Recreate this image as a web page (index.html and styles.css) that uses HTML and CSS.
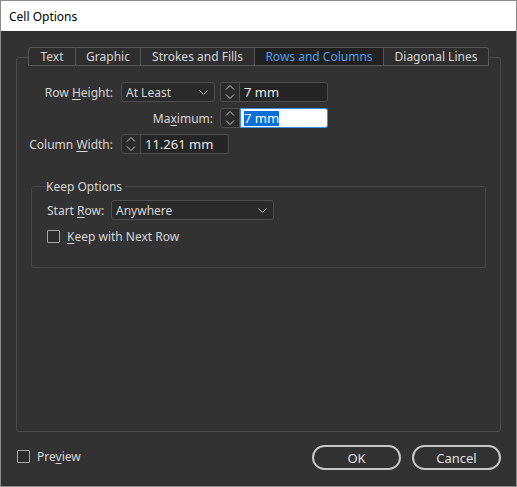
FILE: index.html
```html
<!DOCTYPE html>
<html>
<head>
<meta charset="utf-8">
<link rel="stylesheet" href="styles.css">
</head>
<body>
<div class="window">
  <div class="titlebar">Cell Options</div>
  <div class="body">
    <div class="tabs">
      <div class="tab t1">Text</div>
      <div class="tab t2">Graphic</div>
      <div class="tab t3">Strokes and Fills</div>
      <div class="tab t4 active">Rows and Columns</div>
      <div class="tab t5">Diagonal Lines</div>
    </div>
    <div class="panel">
      <div class="row">
        <span class="label w96">Row <u>H</u>eight:</span>
        <div class="select w94"><span>At Least</span><svg class="chev" width="9" height="6" viewBox="0 0 9 6"><path d="M0.5 0.5 L4.5 4.5 L8.5 0.5" fill="none" stroke="#bdbdbd" stroke-width="1"/></svg></div>
        <div class="spin gap5">
          <div class="arrows"><svg width="10" height="18" viewBox="0 0 10 18"><path d="M1 6.5 L5 2.5 L9 6.5 M1 11.5 L5 15.5 L9 11.5" fill="none" stroke="#c8c8c8" stroke-width="1"/></svg></div>
          <div class="input">7 mm</div>
        </div>
      </div>
      <div class="row">
        <span class="label w196">Ma<u>x</u>imum:</span>
        <div class="spin gap7">
          <div class="arrows"><svg width="10" height="18" viewBox="0 0 10 18"><path d="M1 6.5 L5 2.5 L9 6.5 M1 11.5 L5 15.5 L9 11.5" fill="none" stroke="#c8c8c8" stroke-width="1"/></svg></div>
          <div class="input focus"><span class="sel">7 mm</span></div>
        </div>
      </div>
      <div class="row">
        <span class="label w96">Column <u>W</u>idth:</span>
        <div class="spin">
          <div class="arrows"><svg width="10" height="18" viewBox="0 0 10 18"><path d="M1 6.5 L5 2.5 L9 6.5 M1 11.5 L5 15.5 L9 11.5" fill="none" stroke="#c8c8c8" stroke-width="1"/></svg></div>
          <div class="input">11.261 mm</div>
        </div>
      </div>
      <fieldset class="group">
        <legend>Keep Options</legend>
        <div class="grow">
          <span class="label2">Start <u>R</u>ow:</span>
          <div class="select w163"><span>Anywhere</span><svg class="chev" width="9" height="6" viewBox="0 0 9 6"><path d="M0.5 0.5 L4.5 4.5 L8.5 0.5" fill="none" stroke="#bdbdbd" stroke-width="1"/></svg></div>
        </div>
        <div class="check keep">
          <span class="box"></span><span><u>K</u>eep with Next Row</span>
        </div>
      </fieldset>
    </div>
    <div class="footer">
      <div class="check preview"><span class="box"></span><span>Pre<u>v</u>iew</span></div>
      <div class="buttons">
        <div class="btn">OK</div>
        <div class="btn">Cancel</div>
      </div>
    </div>
  </div>
</div>
</body>
</html>
```
FILE: styles.css
```css
html, body {
  margin: 0;
  padding: 0;
  background: #323232;
}
body {
  font-family: "Noto Sans", "Open Sans", sans-serif;
  font-size: 12px;
  color: #d6d6d6;
}
u { text-decoration: underline; text-underline-offset: 2px; }
.window {
  width: 515px;
  height: 485px;
  border: 1px solid #8c8c8c;
  display: flex;
  flex-direction: column;
  background: #323232;
}
.titlebar {
  height: 30px;
  background: #ffffff;
  color: #000;
  display: flex;
  align-items: center;
  padding-left: 8px;
  font-size: 12px;
}
.body {
  flex: 1;
  display: flex;
  flex-direction: column;
  padding: 16px 15px 0 15px;
}
.tabs {
  display: flex;
  margin-left: 12px;
  height: 19px;
  position: relative;
  z-index: 1;
}
.tab {
  height: 17px;
  border: 1px solid #575757;
  border-left: none;
  background: #2e2e2e;
  display: flex;
  align-items: center;
  justify-content: center;
  line-height: 1;
  color: #d6d6d6;
  box-sizing: content-box;
}
.t1 { width: 46px; border-left: 1px solid #575757; border-radius: 3px 0 0 0; }
.t2 { width: 64px; }
.t3 { width: 113px; }
.t4 { width: 128px; }
.t5 { width: 104px; border-radius: 0 3px 0 0; }
.tab.active { background: #202020; color: #4e9ee8; }
.panel {
  margin-top: -9px;
  height: 349px;
  border: 1px solid #4a4a4a;
  border-radius: 3px;
  display: flex;
  flex-direction: column;
  padding-top: 24px;
}
.row {
  display: flex;
  align-items: center;
  height: 20px;
  margin-bottom: 6px;
}
.label { text-align: right; white-space: nowrap; }
.w96 { width: 96px; margin-right: 8px; }
.w196 { width: 196px; }
.select {
  height: 18px;
  border: 1px solid #4e4e4e;
  border-radius: 3px;
  background: #2a2a2a;
  display: flex;
  align-items: center;
  justify-content: space-between;
  padding: 0 6px 0 4px;
  box-sizing: content-box;
}
.w94 { width: 82px; }
.w163 { width: 151px; }
.chev { margin-top: 1px; }
.spin {
  display: flex;
  height: 20px;
  width: 108px;
  border: 1px solid #4e4e4e;
  border-radius: 3px;
  box-sizing: border-box;
  background: #2a2a2a;
}
.gap5 { margin-left: 5px; }
.gap7 { margin-left: 7px; }
.arrows {
  width: 18px;
  border-right: 1px solid #4e4e4e;
  display: flex;
  align-items: center;
  justify-content: center;
}
.input {
  flex: 1;
  display: flex;
  align-items: center;
  padding-left: 4px;
  background: #252525;
  font-size: 13px;
  color: #e8e8e8;
  border-radius: 0 2px 2px 0;
}
.focus {
  background: #ffffff;
  border: 1px solid #3d8ee6;
  margin: -1px -1px -1px 0;
  padding-left: 3px;
  border-radius: 0 3px 3px 0;
}
.sel { background: #0a6fd6; color: #fff; line-height: 15px; }
.group {
  margin: 18px 14px 0 14px;
  height: 83px;
  border: 1px solid #484848;
  border-radius: 3px;
  padding: 5px 0 0 15px;
}
legend {
  padding: 0 3px 0 0;
  margin-left: -1px;
  color: #d6d6d6;
  font-size: 12px;
}
.grow { display: flex; align-items: center; height: 20px; }
.label2 { width: 64px; }
.check {
  display: flex;
  align-items: center;
  height: 20px;
}
.keep { margin-top: 6px; }
.box {
  width: 11px;
  height: 11px;
  border: 1px solid #a8a8a8;
  border-radius: 1px;
  margin-right: 7px;
  background: #2c2c2c;
}
.footer {
  display: flex;
  align-items: flex-start;
  justify-content: space-between;
  padding: 13px 0 0 1px;
}
.preview { margin-top: 1px; }
.buttons { display: flex; gap: 11px; }
.btn {
  width: 85px;
  height: 21px;
  border: 2px solid #c8c8c8;
  border-radius: 13px;
  display: flex;
  align-items: center;
  justify-content: center;
  color: #e0e0e0;
  font-size: 13px;
}
```
